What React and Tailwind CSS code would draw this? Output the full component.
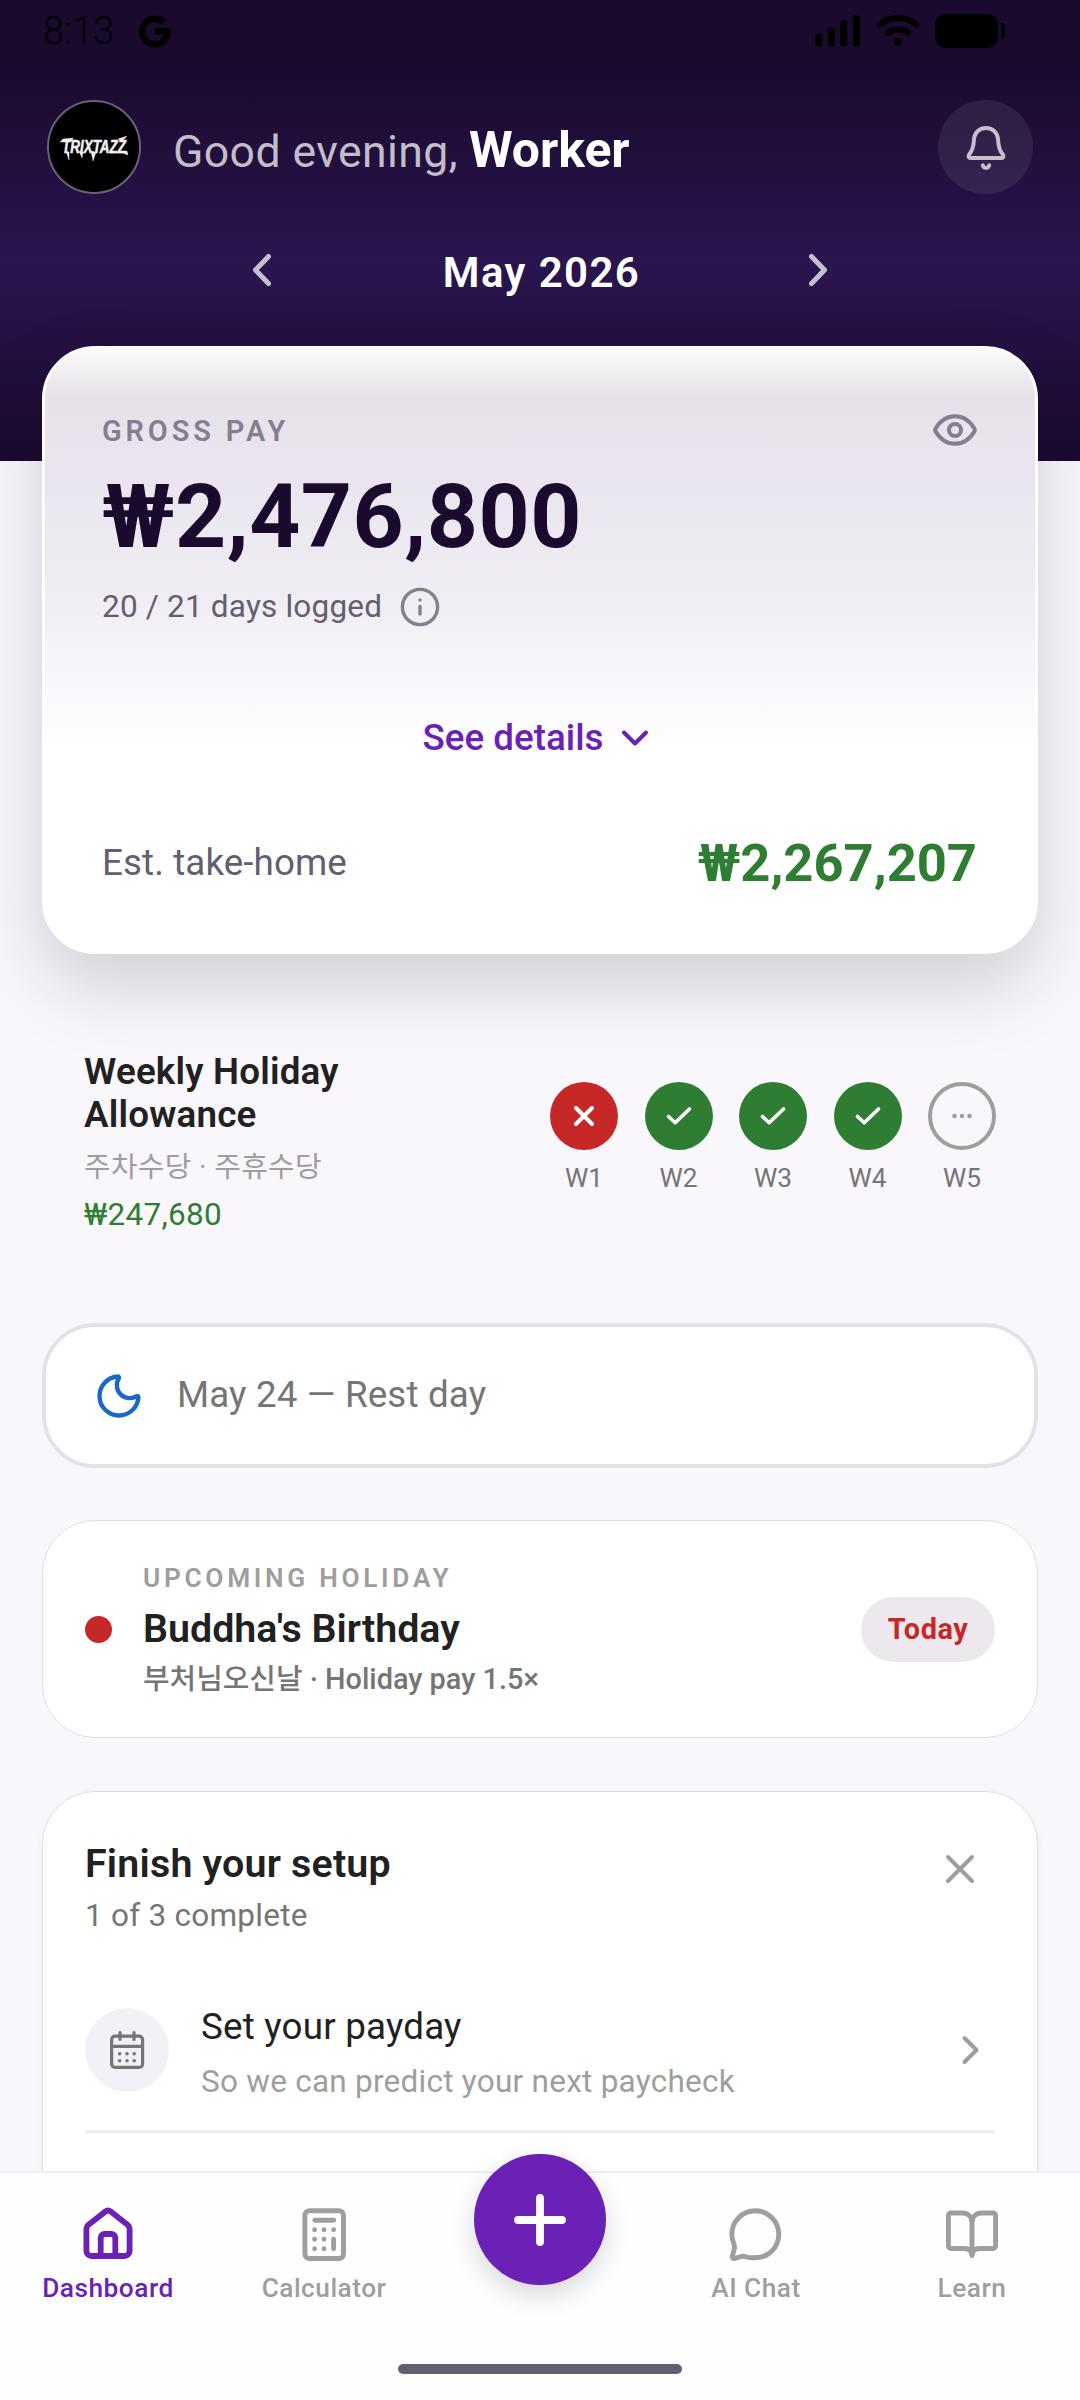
import React from "react";
import { Moon } from "lucide-react";

const Svg = ({ w, h, sw = 4, className = "", children }) => (
  <svg
    width={w}
    height={h}
    viewBox={`0 0 ${w} ${h}`}
    fill="none"
    stroke="currentColor"
    strokeWidth={sw}
    strokeLinecap="round"
    strokeLinejoin="round"
    className={`shrink-0 ${className}`}
  >
    {children}
  </svg>
);

const HomeIcon = () => (
  <Svg w={52} h={54} sw={5.8}>
    <path d="M4.4 21.8c0-1.5.6-2.8 1.8-3.8L23.3 4.6a4.3 4.3 0 0 1 5.4 0L45.8 18c1.2 1 1.8 2.3 1.8 3.8V44a5 5 0 0 1-5 5H9.4a5 5 0 0 1-5-5Z" />
    <path d="M18.7 49V31a4 4 0 0 1 4-4h6.6a4 4 0 0 1 4 4V49" />
  </Svg>
);

const CalculatorIcon = () => (
  <Svg w={52} h={54} sw={4.9}>
    <rect x="6.9" y="3.7" width="38.6" height="47.8" rx="4.5" />
    <path d="M16.8 13.3h18.9M16.6 22.8h.01M26 22.8h.01M35.6 22.8h.01M16.6 32.3h.01M26 32.3h.01M16.6 41.7h.01M26 41.7h.01M35.6 32.3v9.4" />
  </Svg>
);

const ChatIcon = () => (
  <Svg w={54} h={56} sw={4.9}>
    <path d="M26.3 50.8A23.5 23.5 0 1 0 2.8 27.3c0 3.5.8 6.6 2 9.4.8 1.9 1 3.3.5 5.2l-2 7.3a1.8 1.8 0 0 0 2.2 2.2l7.3-2c1.5-.4 2.7-.3 4.1.3 2.9 1.1 6 1.1 9.4 1.1Z" />
  </Svg>
);

const BookIcon = () => (
  <Svg w={52} h={54} sw={4.9}>
    <path d="M26 15a9 9 0 0 0-9-9H5a2.6 2.6 0 0 0-2.6 2.6V39A2.6 2.6 0 0 0 5 41.5h13.5c4.5 0 7.5 2.5 7.5 7" />
    <path d="M26 15a9 9 0 0 1 9-9h12a2.6 2.6 0 0 1 2.6 2.6V39a2.6 2.6 0 0 1-2.6 2.5H33.5c-4.5 0-7.5 2.5-7.5 7V15" />
  </Svg>
);

const BellIcon = () => (
  <Svg w={52} h={52} sw={4}>
    <path d="M26 7c-7 0-11.8 5-12.1 12-.3 7-1.4 10.600-4.700 14.400-1.300 1.600-.6 3.700 1.300 3.700h31c1.900 0 2.600-2.100 1.300-3.700-3.300-3.800-4.400-7.400-4.700-14.400C37.800 12 33 7 26 7Z" />
    <path d="M22.800 44.400c1.300 3.400 5.100 3.400 6.400 0" />
  </Svg>
);

const EyeIcon = () => (
  <Svg w={44} h={32} sw={4} className="mb-[2px]">
    <path d="M2.600 14.500C7.500 6.300 14 2.200 22 2.200s14.500 4.100 19.400 12.300a3 3 0 0 1 0 3C36.500 25.700 30 29.800 22 29.800S7.500 25.700 2.600 17.500a3 3 0 0 1 0-3Z" />
    <circle cx="22" cy="16" r="6" />
  </Svg>
);

const InfoIcon = () => (
  <Svg w={40} h={40} sw={3.4} className="text-[#847e90]">
    <circle cx="20" cy="20" r="17.6" />
    <path d="M20 19.500v7.500M20 13h.01" />
  </Svg>
);

const CalendarIcon = () => (
  <Svg w={36} h={40} sw={3.2}>
    <rect x="2.6" y="6.2" width="31" height="31.2" rx="3.5" />
    <path d="M2.600 16.300h31M11 2.600v6.800M25 2.600v6.800" />
    <path d="M10.700 23.700h.01M18 23.700h.01M25.200 23.700h.01M10.700 30.700h.01M18 30.700h.01M25.200 30.700h.01" strokeWidth="3.6" />
  </Svg>
);

const weeks = [
  { label: "W1", status: "missed" },
  { label: "W2", status: "paid" },
  { label: "W3", status: "paid" },
  { label: "W4", status: "paid" },
  { label: "W5", status: "pending" },
];

const circleStyles = {
  missed: "bg-[#c62828] text-white",
  paid: "bg-[#2e7d32] text-white",
  pending: "border-4 border-[#9e9e9e] text-[#9e9e9e]",
};

const WeekBadge = ({ label, status }) => (
  <div className="flex w-[68px] flex-col items-center">
    <div className={`flex h-[68px] w-[68px] items-center justify-center rounded-full ${circleStyles[status]}`}>
      {status === "missed" && (
        <Svg w={22} h={22}>
          <path d="m3 3 16 16M19 3 3 19" />
        </Svg>
      )}
      {status === "paid" && (
        <Svg w={28} h={22} sw={3.6}>
          <path d="m3.500 11.500 6.700 6.200L24.500 4" />
        </Svg>
      )}
      {status === "pending" && (
        <Svg w={24} h={8} sw={4.6}>
          <path d="M4.500 4h.01M12 4h.01M19.500 4h.01" />
        </Svg>
      )}
    </div>
    <span className="mt-3 text-[26.25px] leading-8 text-[#757575]">{label}</span>
  </div>
);

const StatusBar = () => (
  <div className="flex h-[62px] items-center justify-between pl-[43px] pr-[75px] text-black">
    <div className="flex items-center gap-[25px]">
      <span className="text-[38px] font-light leading-[62px]">8:13</span>
      <svg width="32" height="34" viewBox="0 0 32 34" fill="none" stroke="currentColor" strokeWidth="6.5">
        <path d="M24.800 8.200A12.800 12.800 0 1 0 28.800 17.200H16" />
      </svg>
    </div>
    <div className="flex items-center gap-[15px]">
      <Svg w={46} h={34} sw={7}>
        <path d="M3.700 23v6M16.300 16.500V29M28.700 9.500V29M41.500 4.500V29" />
      </Svg>
      <Svg w={44} h={34} sw={6}>
        <path d="M3.500 10.500C14 1.700 30 1.700 40.500 10.500" />
        <path d="M12 18.500c6.200-4 13.800-4 20 0" />
        <circle cx="22" cy="28" r="4" fill="currentColor" stroke="none" />
      </Svg>
      <div className="flex items-center gap-[3px]">
        <div className="h-[34px] w-[63px] rounded-[11px] bg-black"></div>
        <div className="h-4 w-1 rounded-r-full bg-black"></div>
      </div>
    </div>
  </div>
);

const Avatar = () => (
  <div className="flex h-[94px] w-[94px] items-center justify-center rounded-full border-2 border-[#6a6078] bg-black">
    <svg width="84" height="40" viewBox="0 0 84 40" fill="#f1f1f1" stroke="#f1f1f1" strokeWidth="0.4">
      <text
        x="10"
        y="18.5"
        transform="scale(1 1.4)"
        textLength="64"
        lengthAdjust="spacingAndGlyphs"
        fontFamily="Liberation Sans"
        fontWeight="bold"
        fontStyle="italic"
        fontSize="13"
      >
        TRIXTAZZ
      </text>
      <path d="M8 15l3-3 10-1-1 3zM17 25l0 8-3-9zM31 25l-1 6-3-7zM44 25l-3 9-2-10zM58 26l17-2 1 4-5-2zM66 12l9-3-5 5z" />
    </svg>
  </div>
);

const tabs = [
  { label: "Dashboard", icon: <HomeIcon />, color: "text-[#6b21b6]" },
  { label: "Calculator", icon: <CalculatorIcon />, color: "text-[#9e9e9e]" },
  { label: null },
  { label: "AI Chat", icon: <ChatIcon />, color: "text-[#9e9e9e]" },
  { label: "Learn", icon: <BookIcon />, color: "text-[#9e9e9e]" },
];

const BottomNav = () => (
  <nav className="relative flex h-[229px] shrink-0 flex-col items-center border-t-2 border-[#f0edf5] bg-[#fefefe]">
    <div className="grid w-full grid-cols-5">
      {tabs.map((tab, i) =>
        tab.label ? (
          <div key={i} className={`flex flex-col items-center pt-[34px] ${tab.color}`}>
            <div className="flex h-[54px] items-start">{tab.icon}</div>
            <span className="mt-[11px] text-[26.25px] font-medium leading-8 tracking-[0.5px]">{tab.label}</span>
          </div>
        ) : (
          <div key={i} className="flex justify-center">
            <button className="-mt-[19px] flex h-[131px] w-[132px] items-center justify-center rounded-full bg-[#6b21b6] text-white shadow-[0_10px_26px_rgba(26,10,46,0.16)]">
              <Svg w={56} h={56} sw={7.8}>
                <path d="M28 6v44M6 28h44" />
              </Svg>
            </button>
          </div>
        )
      )}
    </div>
    <div className="mb-[26px] mt-auto h-[10px] w-[284px] rounded-full bg-[#635e70]"></div>
  </nav>
);

const App = () => {
  return (
    <div className="flex h-[2400px] w-[1080px] flex-col overflow-hidden bg-[#f9f7fc] font-['Roboto','Noto_Sans_CJK_KR',sans-serif]">
      <main className="min-h-0 flex-1 overflow-hidden">
        {/* Header */}
        <header className="h-[461px] bg-[linear-gradient(180deg,#1a0a2e_0px,#1a0a2e_70px,#2a154f_262px,#1a0a2e_461px)]">
          <StatusBar />
          <div className="mt-[38px] flex h-[94px] items-center px-[47px]">
            <Avatar />
            <div className="ml-[32px] flex flex-1 items-baseline gap-[11px] whitespace-nowrap pt-2 leading-[88px]">
              <span className="text-[44.6px] tracking-[0.4px] text-[#c3bcc9]">Good evening,</span>
              <span className="text-[49.9px] font-bold text-white">Worker</span>
            </div>
            <div className="flex h-[94px] w-[95px] items-center justify-center rounded-full bg-white/8 text-[#c6bfcc]">
              <BellIcon />
            </div>
          </div>
          <div className="mt-12 flex h-14 items-center justify-between px-[248px] text-[#c6bfcc]">
            <Svg w={28} h={36} sw={5}>
              <path d="M20.500 4.500 7.500 18l13 13.500" />
            </Svg>
            <span className="pl-[3px] pt-[5px] text-[42px] font-semibold leading-[56px] tracking-[1.4px] text-white">May 2026</span>
            <Svg w={28} h={36} sw={5}>
              <path d="M7.500 4.500 20.500 18l-13 13.500" />
            </Svg>
          </div>
        </header>

        {/* Gross pay */}
        <section className="relative mx-[42px] -mt-[115px] h-[608px] rounded-[53px] border-[3px] border-white bg-white bg-[linear-gradient(180deg,#faf9fc_0px,#e7e2e8_46px,#e9e4ef_120px,#efedf2_240px,#f9f8fc_345px,#ffffff_400px)] pl-[57px] pr-[58px] pt-16 shadow-[0_31px_74px_rgba(26,10,46,0.18)]">
          <div className="flex h-9 items-center justify-between text-[#847e90]">
            <span className="text-[28.9px] font-semibold leading-9 tracking-[3.9px]">GROSS PAY</span>
            <EyeIcon />
          </div>
          <div className="mt-[18px] text-[89.25px] font-bold leading-[100px] tracking-[0.5px] text-[#1a0a2e]">₩2,476,800</div>
          <div className="mt-[21px] flex h-[38px] items-center gap-[18px]">
            <span className="text-[31.5px] leading-[38px] tracking-[0.2px] text-[#635e70]">20 / 21 days logged</span>
            <InfoIcon />
          </div>
          <div className="mt-[90px] flex h-11 items-center justify-center gap-[16px] pr-[5px] text-[#6b21b6]">
            <span className="text-[36.75px] font-medium leading-[44px]">See details</span>
            <Svg w={32} h={24}>
              <path d="m5 6.500 11 11 11-11" />
            </Svg>
          </div>
          <div className="mt-[71px] flex h-16 items-center justify-between">
            <span className="text-[36.75px] leading-[64px] tracking-[0.1px] text-[#635e70]">Est. take-home</span>
            <span className="text-[52.5px] font-bold leading-[64px] text-[#2e7d32]">₩2,267,207</span>
          </div>
        </section>

        {/* Weekly holiday allowance */}
        <section className="mx-[84px] mt-[96px] flex h-[273px] items-start justify-between">
          <div>
            <h2 className="w-[300px] text-[36.75px] font-semibold leading-[43px] tracking-[0.2px] text-[#212121]">Weekly Holiday Allowance</h2>
            <p className="mt-[11px] text-[28.9px] leading-10 tracking-[0.3px] text-[#9e9e9e]">주차수당 · 주휴수당</p>
            <p className="mt-2 text-[31.5px] leading-10 tracking-[0.3px] text-[#2e7d32]">₩247,680</p>
          </div>
          <div className="mt-[32px] flex gap-[26.5px]">
            {weeks.map((week) => (
              <WeekBadge key={week.label} {...week} />
            ))}
          </div>
        </section>

        {/* Today's log */}
        <section className="mx-[42px] flex h-[145px] items-center rounded-[53px] border-4 border-[#e5e1eb] bg-white pl-[47px]">
          <Moon size={52} strokeWidth={2} className="text-[#1968c6]" />
          <span className="ml-[32px] pb-[2px] text-[36.75px] leading-[44px] tracking-[0.15px] text-[#757575]">May 24 — Rest day</span>
        </section>

        {/* Upcoming holiday */}
        <section className="mx-[42px] mt-[52px] flex h-[218px] items-center rounded-[53px] border border-[#e0dce6] bg-white px-[42px]">
          <div className="h-[27px] w-[27px] rounded-full bg-[#c62828]"></div>
          <div className="ml-[31px] flex-1">
            <p className="text-[26.25px] font-semibold leading-8 tracking-[3.7px] text-[#9e9e9e]">UPCOMING HOLIDAY</p>
            <h3 className="mt-3 text-[39.4px] font-semibold leading-[46px] text-[#212121]">Buddha's Birthday</h3>
            <p className="mt-[9px] text-[28.9px] font-medium leading-[36px] text-[#757575]">부처님오신날 · Holiday pay 1.5×</p>
          </div>
          <span className="rounded-full bg-[#ece8ee] px-[26.5px] text-[28.9px] font-bold leading-[65px] tracking-[0.6px] text-[#c62828]">Today</span>
        </section>

        {/* Setup checklist */}
        <section className="mx-[42px] mt-[53px] h-[700px] rounded-[53px] border border-[#e0dce6] bg-white px-[42px] pt-12 shadow-[0_3px_8px_rgba(26,10,46,0.04)]">
          <div className="flex justify-between">
            <div>
              <h3 className="text-[39.4px] font-semibold leading-[48px] tracking-[0.2px] text-[#212121]">Finish your setup</h3>
              <p className="mt-[8px] text-[31.5px] leading-[40px] tracking-[0.25px] text-[#757575]">1 of 3 complete</p>
            </div>
            <Svg w={34} h={34} className="mr-[18px] mt-[12px] text-[#9e9e9e]">
              <path d="m5 5 24 24M29 5 5 29" />
            </Svg>
          </div>
          <div className="mt-[44px] flex h-[140px] items-center">
            <div className="flex h-[84px] w-[84px] items-center justify-center rounded-full bg-[#f3f1f7] pb-px text-[#757575]">
              <CalendarIcon />
            </div>
            <div className="ml-[32px] flex-1 pt-[6px]">
              <p className="text-[36.75px] leading-[44px] tracking-[0.2px] text-[#212121]">Set your payday</p>
              <p className="mt-[13px] text-[31.5px] leading-[40px] tracking-[0.25px] text-[#9e9e9e]">So we can predict your next paycheck</p>
            </div>
            <Svg w={28} h={36} className="mr-[10px] text-[#9e9e9e]">
              <path d="M7.500 6 19.500 18l-12 12" />
            </Svg>
          </div>
          <div className="mt-[10px] h-[3px] bg-[#f0eef5]"></div>
        </section>
      </main>

      <BottomNav />
    </div>
  );
};

export default App;
